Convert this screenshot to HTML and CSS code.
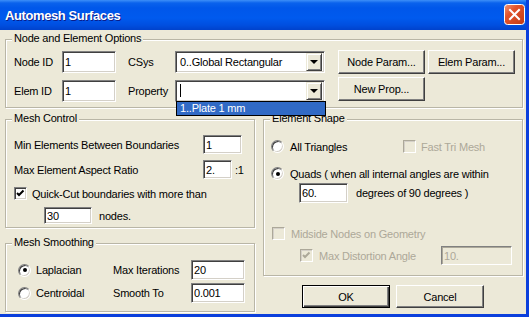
FILE: index.html
```html
<!DOCTYPE html>
<html lang="en">
<head>
    <meta charset="UTF-8">
    <title>Automesh Surfaces</title>
    <link rel="stylesheet" href="styles.css">
</head>
<body>
    <div class="window">
        <div class="titlebar">
            <span class="title">Automesh Surfaces</span>
            <span class="close">
                <svg width="21" height="21" viewBox="0 0 21 21">
                    <defs>
                        <linearGradient id="closeFill" x1="0" y1="0" x2="1" y2="1">
                            <stop offset="0" stop-color="#f09878"/>
                            <stop offset="0.35" stop-color="#e2542d"/>
                            <stop offset="1" stop-color="#c23a12"/>
                        </linearGradient>
                    </defs>
                    <rect x="0.5" y="0.5" width="20" height="20" rx="3" fill="url(#closeFill)" stroke="#ffffff"/>
                    <path d="M6 6 L15 15 M15 6 L6 15" stroke="#ffffff" stroke-width="2" stroke-linecap="square"/>
                </svg>
            </span>
        </div>

        <div class="client">
            <div class="group options">
                <span class="legend">Node and Element Options</span>
                <div class="options-grid">
                    <label>Node ID</label>
                    <input class="field w54" type="text" value="1">
                    <label>CSys</label>
                    <div class="combo">
                        <span class="combo-text">0..Global Rectangular</span>
                        <span class="drop"><span class="arrow"></span></span>
                    </div>
                    <button class="btn">Node Param...</button>
                    <button class="btn">Elem Param...</button>

                    <label>Elem ID</label>
                    <input class="field w54" type="text" value="1">
                    <label>Property</label>
                    <div class="combo">
                        <span class="combo-text"><span class="caret"></span></span>
                        <span class="drop"><span class="arrow"></span></span>
                        <div class="droplist">1..Plate 1 mm</div>
                    </div>
                    <button class="btn new-prop">New Prop...</button>
                </div>
            </div>

            <div class="col">
                <div class="group mesh-control">
                    <span class="legend">Mesh Control</span>
                    <div class="mc-row row-a">
                        <label>Min Elements Between Boundaries</label>
                        <input class="field w39 h19" type="text" value="1">
                    </div>
                    <div class="mc-row row-b">
                        <label>Max Element Aspect Ratio</label>
                        <input class="field w29 h19" type="text" value="2.">
                        <span class="suffix">:1</span>
                    </div>
                    <div class="line row-c">
                        <span class="check checked">
                            <svg width="9" height="9" viewBox="0 0 9 9"><polyline points="1,4 3,6 7.5,1.5" fill="none" stroke="#000" stroke-width="2"/></svg>
                        </span>
                        <span class="gap5">Quick-Cut boundaries with more than</span>
                    </div>
                    <div class="line row-d">
                        <input class="field w48 h17" type="text" value="30">
                        <span class="gap7">nodes.</span>
                    </div>
                </div>

                <div class="group smoothing">
                    <span class="legend">Mesh Smoothing</span>
                    <div class="smooth-grid">
                        <div class="line"><span class="radio on"></span><span class="gap5">Laplacian</span></div>
                        <label>Max Iterations</label>
                        <input class="field w54 h20" type="text" value="20">
                        <div class="line"><span class="radio"></span><span class="gap5">Centroidal</span></div>
                        <label>Smooth To</label>
                        <input class="field w54 h20" type="text" value="0.001">
                    </div>
                </div>
            </div>

            <div class="col">
                <div class="group shape">
                    <span class="legend">Element Shape</span>
                    <div class="line shape-1">
                        <div class="line tri">
                            <span class="radio"></span><span class="gap6">All Triangles</span>
                        </div>
                        <span class="check disabled"></span>
                        <span class="gap5 muted">Fast Tri Mesh</span>
                    </div>
                    <div class="line shape-2">
                        <span class="radio on"></span><span class="gap6">Quads ( when all internal angles are within</span>
                    </div>
                    <div class="line shape-3">
                        <input class="field w49 h20" type="text" value="60.">
                        <span class="gap8">degrees of 90 degrees )</span>
                    </div>
                    <div class="line shape-4">
                        <span class="check disabled"></span>
                        <span class="gap6 muted">Midside Nodes on Geometry</span>
                    </div>
                    <div class="line shape-5">
                        <span class="check disabled">
                            <svg width="9" height="9" viewBox="0 0 9 9"><polyline points="1,4 3,6 7.5,1.5" fill="none" stroke="#aca899" stroke-width="2"/></svg>
                        </span>
                        <span class="gap6 muted distort">Max Distortion Angle</span>
                        <input class="field w71 h19 off" type="text" value="10." disabled>
                    </div>
                </div>

                <div class="actions">
                    <button class="btn default">OK</button>
                    <button class="btn">Cancel</button>
                </div>
            </div>
        </div>
    </div>
</body>
</html>
```

FILE: styles.css
```css
* {
    box-sizing: border-box;
}

body {
    margin: 0;
    background: #ffffff;
    font-family: "Liberation Sans", Arial, sans-serif;
    font-size: 11px;
    letter-spacing: -0.2px;
    color: #000;
}

.window {
    width: 529px;
    height: 317px;
    background: #ece9d8;
    border-right: 3px solid #0b3fdc;
    border-bottom: 3px solid #0b3fdc;
    display: flex;
    flex-direction: column;
}

/* title bar */
.titlebar {
    height: 30px;
    flex-shrink: 0;
    display: flex;
    align-items: center;
    justify-content: space-between;
    padding-left: 5px;
    padding-right: 1px;
    background: linear-gradient(#3d8ff8 0, #0a62ec 3px, #0057ea 8px, #005aee 18px, #004fe0 25px, #0042cc 30px);
}

.title {
    color: #fff;
    font-weight: bold;
    font-size: 13px;
    letter-spacing: -0.4px;
    text-shadow: 1px 1px 0 #0a1c8a;
}

.close {
    width: 21px;
    height: 21px;
    margin-top: -1px;
}

.close svg {
    display: block;
}

/* client layout */
.client {
    flex: 1;
    display: grid;
    grid-template-columns: 250px 260px;
    column-gap: 8px;
    row-gap: 11px;
    align-content: start;
    padding: 9px 0 0 5px;
}

.col {
    display: flex;
    flex-direction: column;
}

.group {
    position: relative;
    border: 1px solid #b9b6a6;
    box-shadow: inset 1px 1px 0 #fff, 1px 1px 0 #fff;
}

.legend {
    position: absolute;
    top: -8px;
    left: 6px;
    padding: 0 2px;
    line-height: 13px;
    background: #ece9d8;
}

.line {
    display: flex;
    align-items: center;
}

.muted {
    color: #aca899;
}

.gap5 { margin-left: 5px; }
.gap6 { margin-left: 6px; }
.gap7 { margin-left: 7px; }
.gap8 { margin-left: 8px; }

/* controls */
.field {
    font: inherit;
    letter-spacing: inherit;
    color: #000;
    height: 22px;
    margin: 0;
    padding: 0 2px;
    background: #fff;
    border: 1px solid;
    border-color: #808080 #fff #fff #808080;
    box-shadow: inset 1px 1px 0 #404040, inset -1px -1px 0 #d4d0c8;
    outline: none;
}

.field.off {
    background: #ece9d8;
    color: #aca899;
    box-shadow: inset 1px 1px 0 #aca899, inset -1px -1px 0 #ece9d8;
}

.w29 { width: 29px; }
.w39 { width: 39px; }
.w48 { width: 48px; }
.w49 { width: 49px; }
.w54 { width: 54px; }
.w71 { width: 71px; }
.h17 { height: 17px; }
.h19 { height: 19px; }
.h20 { height: 20px; }

.btn {
    font: inherit;
    letter-spacing: inherit;
    color: #000;
    height: 24px;
    padding: 0;
    background: #ece9d8;
    border: 1px solid;
    border-color: #fff #404040 #404040 #fff;
    box-shadow: inset -1px -1px 0 #808080;
}

.btn.default {
    border-color: #000;
    box-shadow: inset 1px 1px 0 #fff, inset -1px -1px 0 #404040, inset -2px -2px 0 #808080;
}

.combo {
    position: relative;
    width: 150px;
    height: 22px;
    display: flex;
    align-items: center;
    padding: 2px;
    background: #fff;
    border: 1px solid;
    border-color: #808080 #fff #fff #808080;
    box-shadow: inset 1px 1px 0 #404040, inset -1px -1px 0 #d4d0c8;
}

.combo-text {
    flex: 1;
    padding-left: 2px;
    display: flex;
    align-items: center;
}

.caret {
    width: 1px;
    height: 13px;
    background: #000;
}

.drop {
    width: 16px;
    height: 18px;
    display: flex;
    align-items: center;
    justify-content: center;
    background: #ece9d8;
    border: 1px solid;
    border-color: #ece9d8 #404040 #404040 #ece9d8;
    box-shadow: inset 1px 1px 0 #fff, inset -1px -1px 0 #808080;
}

.arrow {
    width: 0;
    height: 0;
    border-left: 4px solid transparent;
    border-right: 4px solid transparent;
    border-top: 4px solid #000;
    margin-top: 1px;
}

.droplist {
    position: absolute;
    top: 100%;
    left: 0;
    width: 150px;
    height: 15px;
    padding-left: 3px;
    line-height: 13px;
    color: #fff;
    background: #316ac5;
    border: 1px solid #000;
    z-index: 2;
}

.check {
    width: 13px;
    height: 13px;
    flex-shrink: 0;
    display: flex;
    align-items: center;
    justify-content: center;
    background: #fff;
    border: 1px solid;
    border-color: #808080 #fff #fff #808080;
    box-shadow: inset 1px 1px 0 #404040, inset -1px -1px 0 #d4d0c8;
}

.check.disabled {
    background: #ece9d8;
    border-color: #aca899 #fff #fff #aca899;
    box-shadow: inset 1px 1px 0 #d4d0c8;
}

.radio {
    position: relative;
    width: 13px;
    height: 13px;
    flex-shrink: 0;
    border-radius: 50%;
    background: #fff;
    border: 1px solid;
    border-color: #808080 #fff #fff #808080;
    box-shadow: inset 1px 1px 0 #404040, inset -1px -1px 0 #d4d0c8;
}

.radio.on::after {
    content: "";
    position: absolute;
    left: 3.5px;
    top: 3.5px;
    width: 4px;
    height: 4px;
    border-radius: 50%;
    background: #000;
}

/* node and element options */
.options {
    grid-column: 1 / -1;
    height: 69px;
    padding: 7px 0 0 8px;
}

.options-grid {
    display: grid;
    grid-template-columns: 48px 66px 47px 163px 90px 87px;
    grid-template-rows: 29px 29px;
    align-items: center;
}

.options-grid .btn {
    width: 87px;
}

.new-prop {
    margin-top: -4px;
}

/* mesh control */
.mesh-control {
    height: 109px;
    padding: 15px 0 0 8px;
}

.mc-row {
    display: grid;
    grid-template-columns: 189px auto auto;
    justify-content: start;
    align-items: center;
}

.row-b {
    margin-top: 6px;
}

.suffix {
    margin-left: 3px;
}

.row-c {
    margin-top: 8px;
}

.row-d {
    margin-top: 7px;
    padding-left: 30px;
}

/* mesh smoothing */
.smoothing {
    height: 69px;
    margin-top: 15px;
    padding: 16px 0 0 12px;
}

.smooth-grid {
    display: grid;
    grid-template-columns: 95px 78px 54px;
    grid-template-rows: 20px 20px;
    row-gap: 3px;
    align-items: center;
}

/* element shape */
.shape {
    height: 157px;
    padding: 20px 0 0 7px;
}

.tri {
    width: 132px;
}

.shape-2 {
    margin-top: 14px;
}

.shape-3 {
    margin-top: 3px;
    padding-left: 28px;
}

.shape-4 {
    margin-top: 24px;
    padding-left: 1px;
}

.shape-5 {
    margin-top: 6px;
    padding-left: 29px;
}

.distort {
    width: 122px;
}

.actions {
    display: flex;
    gap: 6px;
    margin-top: 9px;
    padding-left: 39px;
}

.actions .btn {
    width: 88px;
    height: 23px;
}
```
